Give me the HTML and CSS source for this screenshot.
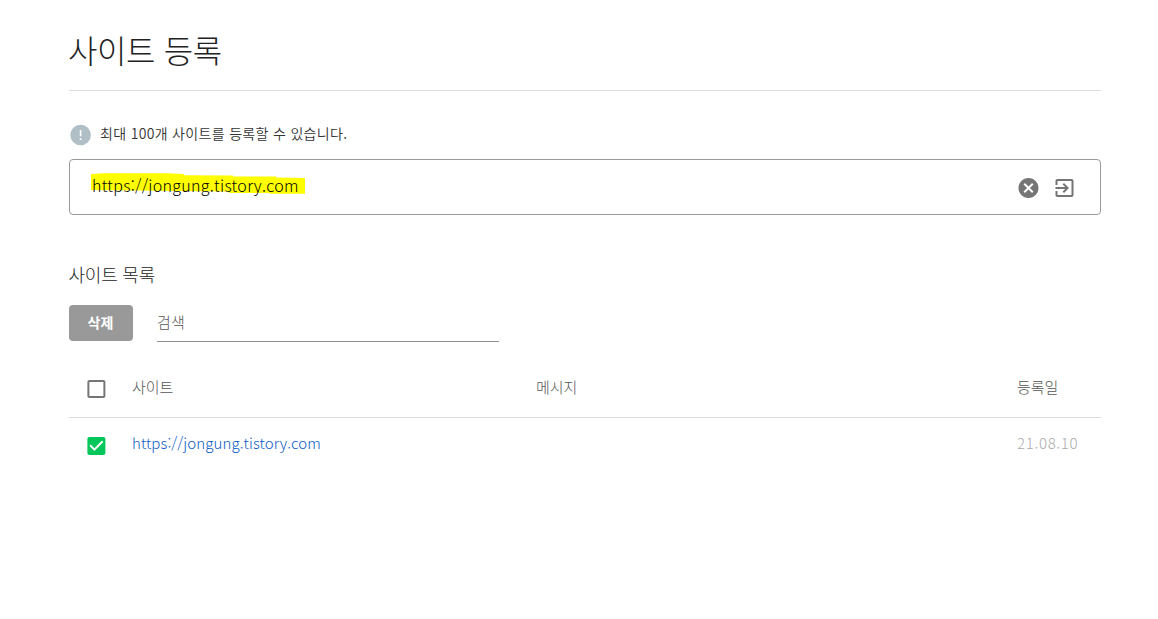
FILE: index.html
```
<!DOCTYPE html>
<html lang="ko">
<head>
    <meta charset="UTF-8">
    <title>사이트 등록</title>
    <link rel="stylesheet" href="styles.css">
</head>
<body>

    <div class="container">
        <h1>사이트 등록</h1>

        <div class="notice">
            <svg class="icon-info" viewBox="0 0 24 24">
                <circle cx="11.6" cy="12" r="10.3" fill="#b0bec5"/>
                <path d="M10.8 7h1.6v6.3h-1.6zM10.8 15.3h1.6v1.7h-1.6z" fill="#fff"/>
            </svg>
            <span>최대 100개 사이트를 등록할 수 있습니다.</span>
        </div>

        <div class="url-box">
            <div class="url-text">
                <svg class="marker" viewBox="0 0 214 21">
                    <path d="M0 1L13 .3H76L93 1V2.3L142 2.6V3.4L185 3.6V4.5L214 5V20.7H180L178 20H138V18.5L89 18L0 17z" fill="#ff0"/>
                </svg>
                <span>https://jongung.tistory.com</span>
            </div>
            <div class="url-icons">
                <svg viewBox="0.5 0 24 24"><path d="M12 2C6.47 2 2 6.47 2 12s4.47 10 10 10 10-4.47 10-10S17.53 2 12 2zm5 13.59L15.59 17 12 13.41 8.41 17 7 15.59 10.59 12 7 8.41 8.41 7 12 10.59 15.59 7 17 8.41 13.41 12 17 15.59z"/></svg>
                <svg viewBox="0.5 0 24 24"><path d="M10.09 15.59L11.5 17l5-5-5-5-1.41 1.41L12.67 11H3v2h9.67l-2.58 2.59zM19 3H5c-1.11 0-2 .9-2 2v4h2V5h14v14H5v-4H3v4c0 1.1.89 2 2 2h14c1.1 0 2-.9 2-2V5c0-1.1-.9-2-2-2z"/></svg>
            </div>
        </div>

        <h2>사이트 목록</h2>

        <div class="toolbar">
            <button type="button">삭제</button>
            <div class="search">검색</div>
        </div>

        <div class="row head">
            <svg class="check" viewBox="-0.4 0 24 24"><path d="M19 5v14H5V5h14m0-2H5c-1.1 0-2 .9-2 2v14c0 1.1.9 2 2 2h14c1.1 0 2-.9 2-2V5c0-1.1-.9-2-2-2z" fill="#757575"/></svg>
            <span class="site">사이트</span>
            <span class="message">메시지</span>
            <span class="date">등록일</span>
        </div>
        <div class="row">
            <svg class="check" viewBox="-0.4 0 24 24"><path d="M19 3H5c-1.11 0-2 .9-2 2v14c0 1.1.89 2 2 2h14c1.11 0 2-.9 2-2V5c0-1.1-.89-2-2-2zm-9 14l-5-5 1.41-1.41L10 14.17l7.59-7.59L19 8l-9 9z" fill="#03c75a"/></svg>
            <span class="site"><a>https://jongung.tistory.com</a></span>
            <span class="message"></span>
            <span class="date">21.08.10</span>
        </div>
    </div>

</body>
</html>
```
FILE: styles.css
```
* {
    box-sizing: border-box;
}

body {
    margin: 0;
    background: #fff;
    font-family: "Noto Sans CJK KR", sans-serif;
    font-weight: 300;
    color: #222;
}

.container {
    width: 1032px;
    margin-left: 69px;
}

h1 {
    height: 91px;
    margin: 0;
    padding-top: 25px;
    border-bottom: 1px solid #ddd;
    font-size: 32px;
    font-weight: 300;
    line-height: 48px;
    letter-spacing: -0.4px;
    text-indent: -1px;
}

.notice {
    display: flex;
    align-items: center;
    gap: 7px;
    height: 24px;
    margin-top: 32px;
    font-size: 14px;
    line-height: 22px;
    font-weight: 350;
    letter-spacing: 0.32px;
    color: #333;
}

.notice span {
    margin-bottom: 4px;
}

.icon-info {
    width: 24px;
    height: 24px;
}

.url-box {
    display: flex;
    justify-content: space-between;
    height: 56px;
    margin-top: 12px;
    padding: 0 23px;
    border: 1px solid #999;
    border-radius: 4px;
}

.url-text {
    position: relative;
    padding-top: 13px;
    font-size: 16px;
    line-height: 24px;
    font-weight: 300;
    letter-spacing: 0.3px;
    text-indent: -1px;
    color: #000;
}

.url-text span {
    position: relative;
}

.marker {
    position: absolute;
    left: -2px;
    top: 13px;
    width: 214px;
    height: 21px;
}

.url-icons {
    display: flex;
    align-items: center;
    gap: 12px;
    padding-top: 2px;
}

.url-icons svg {
    width: 24px;
    height: 24px;
    fill: #757575;
}

h2 {
    height: 30px;
    margin: 44px 0 16px;
    font-size: 18px;
    font-weight: 300;
    line-height: 30px;
    letter-spacing: -0.2px;
    text-indent: -0.6px;
}

.toolbar {
    display: flex;
    gap: 24px;
}

button {
    width: 64px;
    height: 36px;
    padding: 0 1px 3px 0;
    border: none;
    border-radius: 4px;
    background-color: #999;
    color: #fff;
    font-family: inherit;
    font-size: 14px;
    font-weight: 700;
}

.search {
    width: 342px;
    height: 37px;
    border-bottom: 1px solid #8e8e8e;
    font-size: 15px;
    line-height: 34px;
    letter-spacing: 0.3px;
    color: #555;
}

.row {
    display: flex;
    align-items: center;
    height: 56px;
    padding-left: 15px;
    font-size: 15px;
    color: #555;
}

.head {
    height: 58px;
    margin-top: 18px;
    border-bottom: 1px solid #ddd;
}

.row span {
    margin-bottom: 7px;
}

.head span {
    margin-bottom: 4px;
}

.check {
    width: 24px;
    height: 24px;
    margin-right: 24px;
}

.row .site {
    width: 404px;
}

.row .message {
    width: 481px;
}

.row .date {
    color: #aaa;
    letter-spacing: 0.7px;
}

.head .date {
    color: #555;
    letter-spacing: 0;
}

.row a {
    letter-spacing: 0.1px;
    color: #0b5cc4;
}
```
